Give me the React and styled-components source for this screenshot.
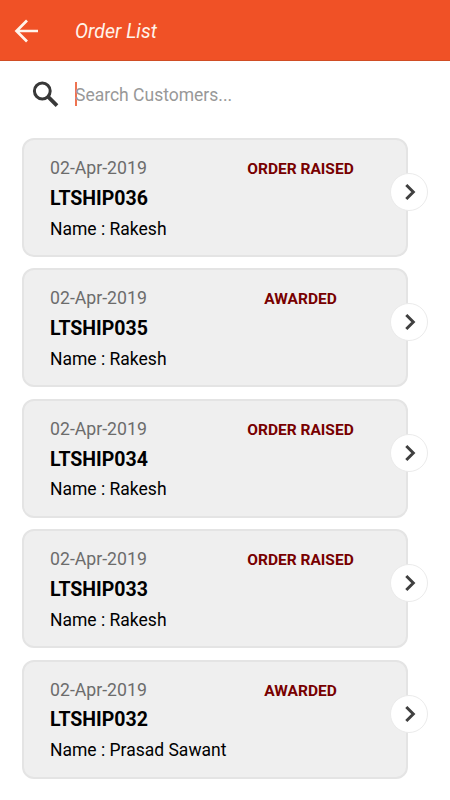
import { useState } from 'react';
import { createGlobalStyle, styled } from 'styled-components';

const GlobalStyle = createGlobalStyle`
  * {
    box-sizing: border-box;
  }
  body {
    margin: 0;
    background: #fff;
    font-family: Roboto, sans-serif;
  }
`;

const Screen = styled.div`
  display: flex;
  flex-direction: column;
  width: 450px;
  height: 800px;
  overflow: hidden;
`;

const TopBar = styled.header`
  display: flex;
  align-items: center;
  gap: 35px;
  height: 61px;
  padding: 1px 0 0 14px;
  border-bottom: 1px solid #d04d24;
  color: #fff4ea;
  background-color: #f05126;
`;

const Title = styled.h1`
  margin: 0;
  padding-top: 2px;
  font-size: 19.5px;
  font-style: italic;
  font-weight: 400;
`;

const SearchRow = styled.label`
  display: flex;
  align-items: center;
  height: 66px;
  padding-left: 32px;
`;

const Caret = styled.span`
  width: 2px;
  height: 24px;
  margin-left: 16px;
  background-color: #ef7350;
`;

const SearchInput = styled.input`
  width: 300px;
  margin-left: -2px;
  padding: 2px 0 0;
  border: none;
  outline: none;
  background: none;
  font-family: inherit;
  font-size: 17.5px;

  &::placeholder {
    color: #989898;
    opacity: 1;
  }
`;

const OrderList = styled.main`
  display: flex;
  flex-direction: column;
  gap: 11.4px;
  padding: 11px 42px 0 22px;
`;

const Card = styled.article`
  position: relative;
  display: flex;
  height: 119px;
  padding: 16px 25px 0 26px;
  border: 2px solid #e4e4e4;
  border-radius: 12px;
  background-color: #efefef;
`;

const Details = styled.div`
  display: flex;
  flex: 1;
  flex-direction: column;
  min-width: 0;
  white-space: nowrap;
`;

const DateText = styled.span`
  height: 30.8px;
  line-height: 24px;
  font-size: 17.7px;
  color: #6c6c6c;
`;

const OrderId = styled.strong`
  height: 29.8px;
  line-height: 24px;
  font-size: 19.5px;
  font-weight: 700;
  color: #000;
`;

const Customer = styled.span`
  line-height: 24px;
  font-size: 17.5px;
  color: #000;
`;

const Status = styled.span`
  flex: none;
  width: 161px;
  padding-top: 1px;
  line-height: 24px;
  text-align: center;
  font-size: 15.5px;
  font-weight: 700;
  color: #780000;
`;

// sits across the right edge of the card
const OpenButton = styled.button`
  position: absolute;
  top: 33px;
  right: -22px;
  display: flex;
  align-items: center;
  justify-content: center;
  width: 38px;
  height: 38px;
  padding: 0 0 0 2px;
  border: 1px solid #ebebeb;
  border-radius: 50%;
  background-color: #fff;
`;

const orders = [
  { id: 'LTSHIP036', date: '02-Apr-2019', name: 'Rakesh', status: 'ORDER RAISED' },
  { id: 'LTSHIP035', date: '02-Apr-2019', name: 'Rakesh', status: 'AWARDED' },
  { id: 'LTSHIP034', date: '02-Apr-2019', name: 'Rakesh', status: 'ORDER RAISED' },
  { id: 'LTSHIP033', date: '02-Apr-2019', name: 'Rakesh', status: 'ORDER RAISED' },
  { id: 'LTSHIP032', date: '02-Apr-2019', name: 'Prasad Sawant', status: 'AWARDED' },
];

function BackIcon() {
  return (
    <svg width="26" height="26" viewBox="0 0 26 26" fill="none" stroke="currentColor" strokeWidth="2.7">
      <path d="M24 13H3M13 2.5L2.5 13L13 23.5" />
    </svg>
  );
}

function SearchIcon() {
  return (
    <svg width="27" height="27" viewBox="0 0 27 27" fill="none" stroke="#383838">
      <circle cx="10.3" cy="10" r="7.9" strokeWidth="3" />
      <path d="M16 15.7L25 24.7" strokeWidth="3.8" />
    </svg>
  );
}

function ChevronIcon() {
  return (
    <svg width="12" height="18" viewBox="0 0 12 18" fill="none" stroke="#404040" strokeWidth="3">
      <path d="M2.3 2L9.3 9L2.3 16" />
    </svg>
  );
}

function OrderCard({ order }) {
  return (
    <Card>
      <Details>
        <DateText>{order.date}</DateText>
        <OrderId>{order.id}</OrderId>
        <Customer>Name : {order.name}</Customer>
      </Details>
      <Status>{order.status}</Status>
      <OpenButton aria-label={order.id}>
        <ChevronIcon />
      </OpenButton>
    </Card>
  );
}

export default function App() {
  const [query, setQuery] = useState('');

  const visibleOrders = orders.filter((order) =>
    order.name.toLowerCase().includes(query.toLowerCase())
  );

  return (
    <Screen>
      <GlobalStyle />
      <TopBar>
        <BackIcon />
        <Title>Order List</Title>
      </TopBar>
      <SearchRow>
        <SearchIcon />
        <Caret />
        <SearchInput
          placeholder="Search Customers..."
          value={query}
          onChange={(event) => setQuery(event.target.value)}
        />
      </SearchRow>
      <OrderList>
        {visibleOrders.map((order) => (
          <OrderCard key={order.id} order={order} />
        ))}
      </OrderList>
    </Screen>
  );
}
